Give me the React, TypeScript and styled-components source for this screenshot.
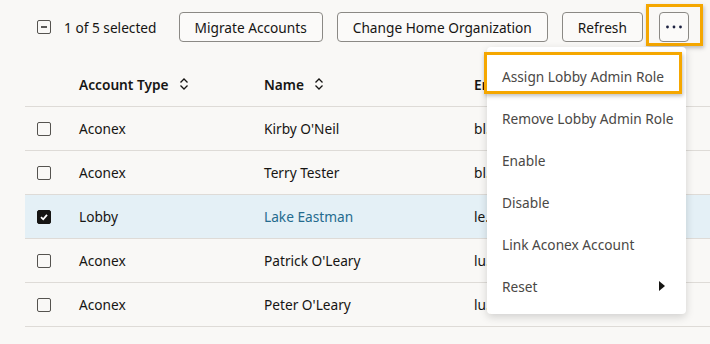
import styled, { createGlobalStyle, css } from "styled-components";

const GlobalStyle = createGlobalStyle`
  html, body {
    margin: 0;
    padding: 0;
  }
  body {
    background: #f9f8f6;
    font-family: "Noto Sans", "Open Sans", sans-serif;
    font-size: 13.7px;
    color: #161513;
  }
`;

const highlight = css`
  &::after {
    content: "";
    position: absolute;
    border: 3px solid #f5a700;
    box-shadow: 1px 2px 4px rgba(0, 0, 0, 0.25);
    pointer-events: none;
  }
`;

const Page = styled.div`
  position: relative;
  width: 710px;
  height: 344px;
  overflow: hidden;
  padding-left: 25px;
  box-sizing: border-box;
`;

const Toolbar = styled.div`
  display: flex;
  align-items: center;
  height: 30px;
  padding: 12px 0 20px 12px;
`;

const Selection = styled.div`
  display: flex;
  align-items: center;
  gap: 13px;
  margin-right: 22px;
`;

const Actions = styled.div`
  display: flex;
  align-items: center;
  gap: 14px;
`;

const Button = styled.button`
  position: relative;
  height: 30px;
  padding: 0 15px;
  border: 1px solid #8b8985;
  border-radius: 4px;
  background: #fbfaf9;
  font-family: inherit;
  font-size: 13.7px;
  color: #161513;
  display: flex;
  align-items: center;
`;

const IconButton = styled(Button)<{ $marked?: boolean }>`
  width: 30px;
  margin-left: 2px;
  padding: 0;
  justify-content: center;
  ${(p) =>
    p.$marked &&
    css`
      ${highlight}
      &::after {
        left: -14px;
        right: -15px;
        top: -9px;
        bottom: -5px;
      }
    `}
`;

const Box = styled.span<{ $state: "off" | "on" | "mixed" }>`
  width: 14px;
  height: 14px;
  box-sizing: border-box;
  border-radius: 2px;
  border: 1.5px solid #55534f;
  display: inline-flex;
  align-items: center;
  justify-content: center;
  background: ${(p) => (p.$state === "on" ? "#161513" : "transparent")};
  border-color: ${(p) => (p.$state === "on" ? "#161513" : "#55534f")};
`;

const Table = styled.div`
  display: grid;
  grid-template-columns: 42px 185px 210px 1fr;
`;

const Row = styled.div<{ $head?: boolean; $selected?: boolean }>`
  display: contents;
  & > * {
    height: ${(p) => (p.$head ? "44px" : "43px")};
    border-bottom: 1px solid #dedbd7;
    background: ${(p) => (p.$selected ? "#e4f0f6" : "transparent")};
    font-weight: ${(p) => (p.$head ? 600 : 400)};
  }
`;

const Cell = styled.div<{ $link?: boolean }>`
  display: flex;
  align-items: center;
  padding: 0 12px;
  white-space: nowrap;
  overflow: hidden;
  color: ${(p) => (p.$link ? "#246b8e" : "#161513")};
`;

const SortIcon = styled.svg`
  margin-left: 10px;
  width: 10px;
  height: 14px;
`;

const Menu = styled.div`
  position: absolute;
  left: 487px;
  top: 47px;
  width: 199px;
  padding: 8px 0 7px;
  background: #fff;
  border-radius: 4px;
  box-shadow: 0 3px 8px rgba(0, 0, 0, 0.16);
`;

const MenuItem = styled.div<{ $marked?: boolean }>`
  position: relative;
  height: 42px;
  display: flex;
  align-items: center;
  justify-content: space-between;
  padding: 0 21px 0 15px;
  color: #4a4845;
  white-space: nowrap;
  ${(p) =>
    p.$marked &&
    css`
      ${highlight}
      &::after {
        left: -3px;
        right: 4px;
        top: -3px;
        bottom: 3px;
      }
    `}
`;

function Checkbox({ state }: { state: "off" | "on" | "mixed" }) {
  return (
    <Box $state={state}>
      {state === "on" && (
        <svg width="10" height="10" viewBox="0 0 10 10">
          <path d="M2 5.2 L4.2 7.3 L8 2.8" fill="none" stroke="#fff" strokeWidth="1.8" />
        </svg>
      )}
      {state === "mixed" && (
        <svg width="10" height="10" viewBox="0 0 10 10">
          <path d="M2 5 H8" stroke="#161513" strokeWidth="1.4" />
        </svg>
      )}
    </Box>
  );
}

function Sort() {
  return (
    <SortIcon viewBox="0 0 10 14">
      <path d="M1.5 5.5 L5 2 L8.5 5.5 M1.5 8.5 L5 12 L8.5 8.5" fill="none" stroke="#161513" strokeWidth="1.3" />
    </SortIcon>
  );
}

const accounts = [
  { type: "Aconex", name: "Kirby O'Neil", email: "bl.kirby@aconex.com" },
  { type: "Aconex", name: "Terry Tester", email: "bl.terry@aconex.com" },
  { type: "Lobby", name: "Lake Eastman", email: "le.lake@aconex.com", selected: true },
  { type: "Aconex", name: "Patrick O'Leary", email: "lu.patrick@aconex.com" },
  { type: "Aconex", name: "Peter O'Leary", email: "lu.peter@aconex.com" },
];

const menuItems = [
  "Assign Lobby Admin Role",
  "Remove Lobby Admin Role",
  "Enable",
  "Disable",
  "Link Aconex Account",
  "Reset",
];

export default function App() {
  return (
    <>
      <GlobalStyle />
      <Page>
        <Toolbar>
          <Selection>
            <Checkbox state="mixed" />
            <span>1 of 5 selected</span>
          </Selection>
          <Actions>
            <Button>Migrate Accounts</Button>
            <Button>Change Home Organization</Button>
            <Button>Refresh</Button>
            <IconButton $marked aria-label="More actions">
              <svg width="18" height="4" viewBox="0 0 18 4">
                <circle cx="2.5" cy="2" r="1.4" fill="#1c2140" />
                <circle cx="9" cy="2" r="1.4" fill="#1c2140" />
                <circle cx="15.5" cy="2" r="1.4" fill="#1c2140" />
              </svg>
            </IconButton>
          </Actions>
        </Toolbar>

        <Table>
          <Row $head>
            <Cell />
            <Cell>
              Account Type
              <Sort />
            </Cell>
            <Cell>
              Name
              <Sort />
            </Cell>
            <Cell>Email</Cell>
          </Row>
          {accounts.map((a) => (
            <Row key={a.name} $selected={a.selected}>
              <Cell>
                <Checkbox state={a.selected ? "on" : "off"} />
              </Cell>
              <Cell>{a.type}</Cell>
              <Cell $link={a.selected}>{a.name}</Cell>
              <Cell>{a.email}</Cell>
            </Row>
          ))}
        </Table>

        <Menu>
          {menuItems.map((label, i) => (
            <MenuItem key={label} $marked={i === 0}>
              {label}
              {label === "Reset" && (
                <svg width="6" height="10" viewBox="0 0 6 10">
                  <path d="M0 0 L6 5 L0 10 Z" fill="#161513" />
                </svg>
              )}
            </MenuItem>
          ))}
        </Menu>
      </Page>
    </>
  );
}
